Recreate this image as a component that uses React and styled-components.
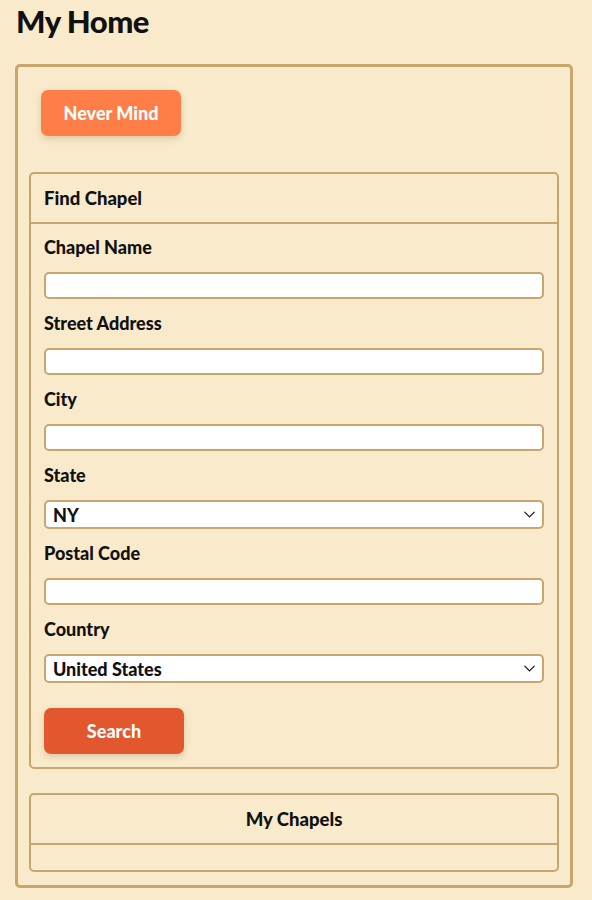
import React, { useState } from 'react';
import styled, { createGlobalStyle } from 'styled-components';
import { ChevronDown } from 'lucide-react';

const GlobalStyle = createGlobalStyle`
  html, body {
    margin: 0;
    padding: 0;
    background: #f8eaca;
  }
  body {
    font-family: Lato, 'Open Sans', sans-serif;
    color: #111;
  }
`;

const S = {
  Page: styled.div`
    padding: 0 19px 16px 15px;
  `,
  Title: styled.h1`
    margin: 0;
    padding-top: 3px;
    padding-left: 1px;
    font-size: 31px;
    line-height: 36px;
    font-weight: 900;
    letter-spacing: -0.5px;
  `,
  Outer: styled.div`
    margin-top: 25px;
    border: 3px solid #c8a76e;
    border-radius: 5px;
    padding: 23px 11px 13px 11px;
    display: flex;
    flex-direction: column;
  `,
  Button: styled.button`
    align-self: flex-start;
    width: 140px;
    height: 46px;
    border: none;
    border-radius: 7px;
    background: ${(p) => p.bg};
    color: #fff;
    font-family: inherit;
    font-size: 18px;
    font-weight: 900;
    letter-spacing: 0;
    box-shadow: 0 3px 6px rgba(120, 90, 40, 0.22);
    cursor: pointer;
    margin-left: ${(p) => p.indent || 0}px;
  `,
  Card: styled.div`
    margin-top: ${(p) => p.top}px;
    border: 2px solid #c8a76e;
    border-radius: 5px;
  `,
  CardHeader: styled.div`
    height: 48px;
    display: flex;
    align-items: center;
    justify-content: ${(p) => (p.center ? 'center' : 'flex-start')};
    padding: 0 13px;
    font-size: 18.5px;
    font-weight: 900;
    letter-spacing: 0;
    border-bottom: 2px solid #c8a76e;
  `,
  CardBody: styled.div`
    padding: 11px 13px 13px 13px;
    min-height: ${(p) => p.minH || 0}px;
    box-sizing: border-box;
  `,
  Field: styled.div`
    display: flex;
    flex-direction: column;
    gap: 13px;
    margin-bottom: 12px;
  `,
  Label: styled.label`
    font-size: 18px;
    line-height: 24px;
    font-weight: 900;
    letter-spacing: 0;
  `,
  Input: styled.input`
    box-sizing: border-box;
    height: 27px;
    width: 100%;
    border: 2px solid #c8a76e;
    border-radius: 5px;
    background: #fff;
    outline: none;
    font-family: inherit;
    font-size: 16px;
  `,
  SelectWrap: styled.div`
    position: relative;
    height: 29px;
  `,
  Select: styled.select`
    appearance: none;
    box-sizing: border-box;
    height: 29px;
    width: 100%;
    border: 2px solid #c8a76e;
    border-radius: 5px;
    background: #fff;
    padding: 0 7px;
    font-family: inherit;
    font-size: 18px;
    font-weight: 900;
    letter-spacing: 0;
    color: #111;
    outline: none;
  `,
  Chevron: styled.span`
    position: absolute;
    right: 5px;
    top: 5px;
    display: flex;
    pointer-events: none;
    color: #111;
  `,
  Actions: styled.div`
    padding-top: 13px;
  `,
};

const textFields = {
  name: 'Chapel Name',
  street: 'Street Address',
  city: 'City',
};

const SelectField = ({ label, value, options, onChange }) => (
  <S.Field>
    <S.Label>{label}</S.Label>
    <S.SelectWrap>
      <S.Select value={value} onChange={(e) => onChange(e.target.value)}>
        {options.map((o) => (
          <option key={o} value={o}>
            {o}
          </option>
        ))}
      </S.Select>
      <S.Chevron>
        <ChevronDown size={19} strokeWidth={1.5} />
      </S.Chevron>
    </S.SelectWrap>
  </S.Field>
);

const App = () => {
  const [state, setState] = useState('NY');
  const [country, setCountry] = useState('United States');

  return (
    <>
      <GlobalStyle />
      <S.Page>
        <S.Title>My Home</S.Title>
        <S.Outer>
          <S.Button bg="#ff7e47" indent={12}>
            Never Mind
          </S.Button>

          <S.Card top={36}>
            <S.CardHeader>Find Chapel</S.CardHeader>
            <S.CardBody>
              {Object.entries(textFields).map(([key, label]) => (
                <S.Field key={key}>
                  <S.Label htmlFor={key}>{label}</S.Label>
                  <S.Input id={key} type="text" />
                </S.Field>
              ))}
              <SelectField
                label="State"
                value={state}
                options={['NY', 'NJ', 'CT', 'PA']}
                onChange={setState}
              />
              <S.Field>
                <S.Label htmlFor="postal">Postal Code</S.Label>
                <S.Input id="postal" type="text" />
              </S.Field>
              <SelectField
                label="Country"
                value={country}
                options={['United States', 'Canada']}
                onChange={setCountry}
              />
              <S.Actions>
                <S.Button bg="#e3572f">Search</S.Button>
              </S.Actions>
            </S.CardBody>
          </S.Card>

          <S.Card top={24}>
            <S.CardHeader center>My Chapels</S.CardHeader>
            <S.CardBody minH={25} />
          </S.Card>
        </S.Outer>
      </S.Page>
    </>
  );
};

export default App;
